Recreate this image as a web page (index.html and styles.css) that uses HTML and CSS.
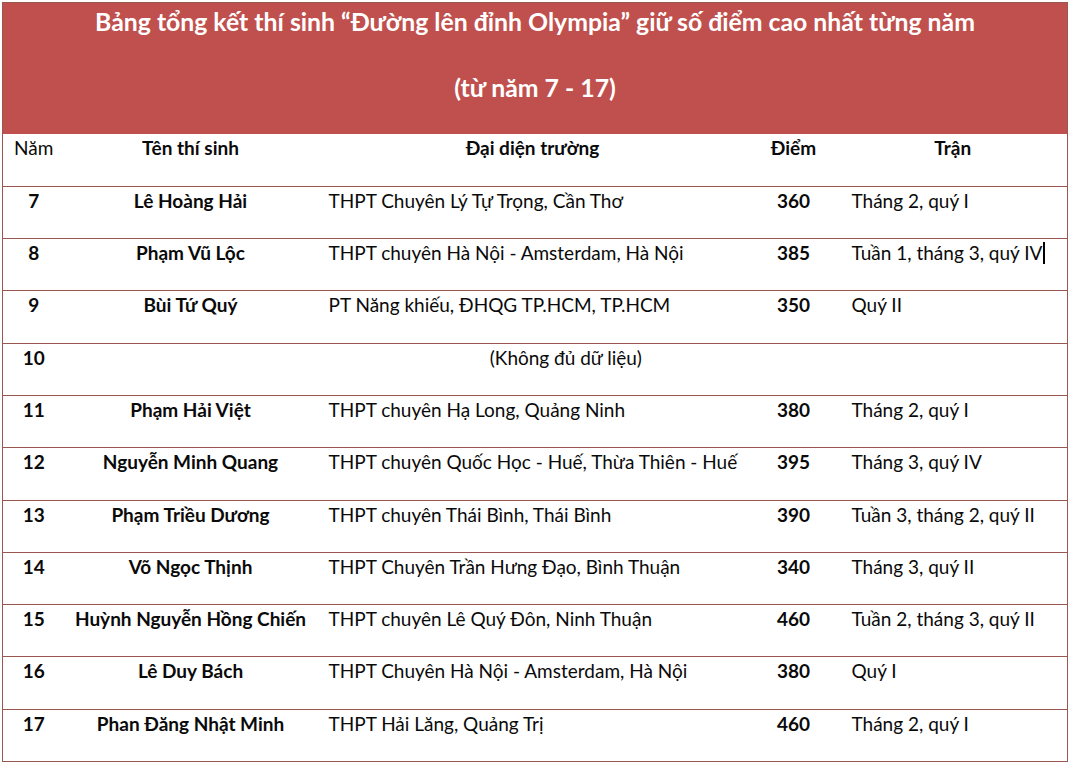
FILE: index.html
```html
<!DOCTYPE html>
<html lang="vi">
<head>
<meta charset="utf-8">
<title>Bảng tổng kết</title>
<link rel="stylesheet" href="styles.css">
</head>
<body>
<table class="board">
  <colgroup>
    <col class="c-year"><col class="c-name"><col class="c-school"><col class="c-score"><col class="c-match">
  </colgroup>
  <thead>
    <tr class="title-row">
      <th colspan="5">
        <div class="title-line">Bảng tổng kết thí sinh “Đường lên đỉnh Olympia” giữ số điểm cao nhất từng năm</div>
        <div class="title-line second">(từ năm 7 - 17)</div>
      </th>
    </tr>
    <tr class="head-row">
      <th class="year plain">Năm</th>
      <th>Tên thí sinh</th>
      <th>Đại diện trường</th>
      <th>Điểm</th>
      <th>Trận</th>
    </tr>
  </thead>
  <tbody>
    <tr><td class="year">7</td><td class="name">Lê Hoàng Hải</td><td class="school">THPT Chuyên Lý Tự Trọng, Cần Thơ</td><td class="score">360</td><td class="match">Tháng 2, quý I</td></tr>
    <tr><td class="year">8</td><td class="name">Phạm Vũ Lộc</td><td class="school">THPT chuyên Hà Nội - Amsterdam, Hà Nội</td><td class="score">385</td><td class="match">Tuần 1, tháng 3, quý IV<span class="caret"></span></td></tr>
    <tr><td class="year">9</td><td class="name">Bùi Tứ Quý</td><td class="school">PT Năng khiếu, ĐHQG TP.HCM, TP.HCM</td><td class="score">350</td><td class="match">Quý II</td></tr>
    <tr><td class="year">10</td><td class="nodata" colspan="4">(Không đủ dữ liệu)</td></tr>
    <tr><td class="year">11</td><td class="name">Phạm Hải Việt</td><td class="school">THPT chuyên Hạ Long, Quảng Ninh</td><td class="score">380</td><td class="match">Tháng 2, quý I</td></tr>
    <tr><td class="year">12</td><td class="name">Nguyễn Minh Quang</td><td class="school">THPT chuyên Quốc Học - Huế, Thừa Thiên - Huế</td><td class="score">395</td><td class="match">Tháng 3, quý IV</td></tr>
    <tr><td class="year">13</td><td class="name">Phạm Triều Dương</td><td class="school">THPT chuyên Thái Bình, Thái Bình</td><td class="score">390</td><td class="match">Tuần 3, tháng 2, quý II</td></tr>
    <tr><td class="year">14</td><td class="name">Võ Ngọc Thịnh</td><td class="school">THPT Chuyên Trần Hưng Đạo, Bình Thuận</td><td class="score">340</td><td class="match">Tháng 3, quý II</td></tr>
    <tr><td class="year">15</td><td class="name">Huỳnh Nguyễn Hồng Chiến</td><td class="school">THPT chuyên Lê Quý Đôn, Ninh Thuận</td><td class="score">460</td><td class="match">Tuần 2, tháng 3, quý II</td></tr>
    <tr><td class="year">16</td><td class="name">Lê Duy Bách</td><td class="school">THPT Chuyên Hà Nội - Amsterdam, Hà Nội</td><td class="score">380</td><td class="match">Quý I</td></tr>
    <tr><td class="year">17</td><td class="name">Phan Đăng Nhật Minh</td><td class="school">THPT Hải Lăng, Quảng Trị</td><td class="score">460</td><td class="match">Tháng 2, quý I</td></tr>
  </tbody>
</table>
</body>
</html>
```

FILE: styles.css
```css
html, body {
  margin: 0;
  padding: 0;
  background: #ffffff;
}

body {
  font-family: Lato, "Open Sans", "Liberation Sans", sans-serif;
  color: #0a0a0a;
}

.board {
  margin: 2px 0 0 2px;
  width: 1065px;
  border-collapse: collapse;
  table-layout: fixed;
  border: 1px solid #9a5752;
  font-size: 19px;
}

.c-year { width: 62px; }
.c-name { width: 252px; }
.c-school { width: 432px; }
.c-score { width: 90px; }
.c-match { width: 229px; }

.title-row th {
  background: #c0504d;
  color: #ffffff;
  font-weight: 700;
  font-size: 24.8px;
  height: 131px;
  padding: 0;
  vertical-align: top;
  text-align: center;
}

.title-line {
  line-height: 28px;
  padding-top: 5px;
}

.title-line.second {
  padding-top: 38px;
}

.head-row th,
tbody td {
  height: 52.3px;
  box-sizing: border-box;
  padding: 3px 0 0 0;
  vertical-align: top;
  line-height: 22px;
  white-space: nowrap;
  border-bottom: 1px solid #9a5752;
}

.head-row th {
  font-weight: 700;
  text-align: center;
}

.head-row th.plain {
  font-weight: 400;
}

td.year {
  text-align: center;
  font-weight: 700;
}

td.name {
  text-align: center;
  font-weight: 700;
}

td.school {
  text-align: left;
  padding-left: 12px;
}

td.score {
  text-align: center;
  font-weight: 700;
}

td.match {
  text-align: left;
  padding-left: 13px;
}

td.nodata {
  text-align: center;
}

.caret {
  display: inline-block;
  width: 2px;
  height: 22px;
  background: #000000;
  vertical-align: top;
  margin-left: 1px;
}
```
